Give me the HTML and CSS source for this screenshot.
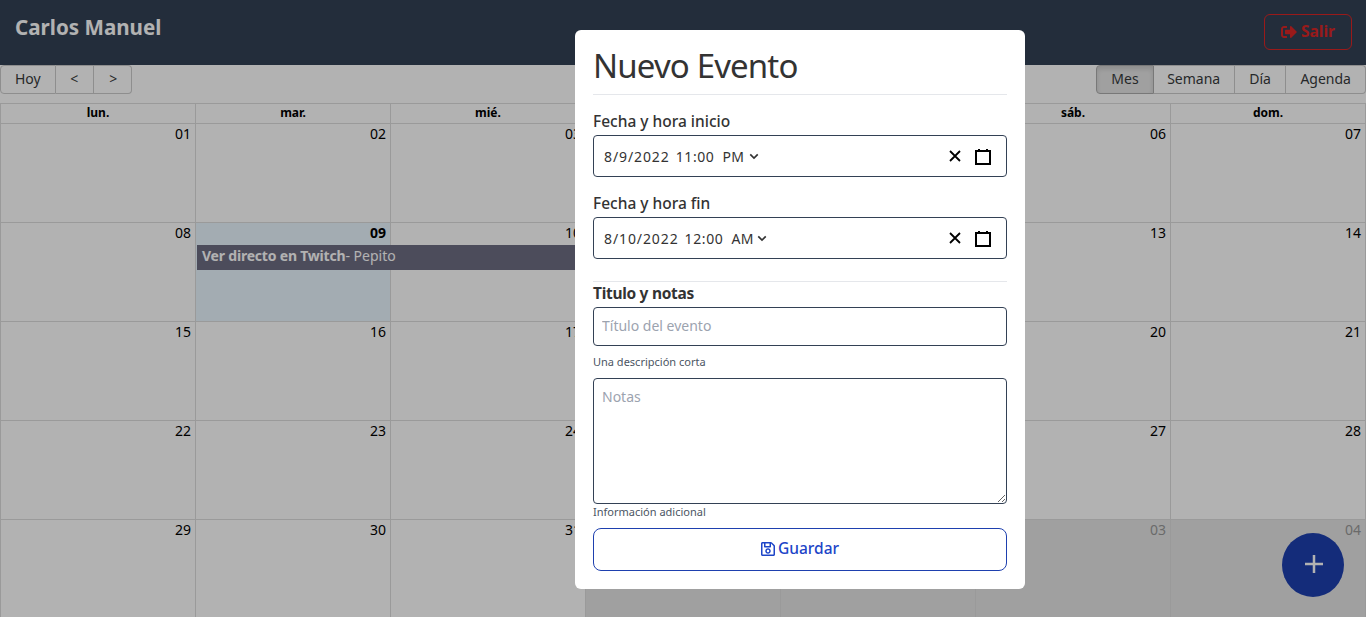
FILE: index.html
```html
<!DOCTYPE html>
<html lang="es">
<head>
<meta charset="utf-8">
<title>Calendario</title>
<link rel="stylesheet" href="styles.css">
</head>
<body>
<header class="topbar">
  <span class="brand">Carlos Manuel</span>
  <button class="logout">
    <svg class="logout-icon" viewBox="0 0 512 512"><path d="M497 273L329 441c-15 15-41 4.500-41-17v-96H152c-13.300 0-24-10.700-24-24v-96c0-13.300 10.700-24 24-24h136V88c0-21.400 25.900-32 41-17l168 168c9.300 9.400 9.300 24.600 0 34zM192 436v-40c0-6.600-5.400-12-12-12H96c-17.700 0-32-14.300-32-32V160c0-17.700 14.300-32 32-32h84c6.600 0 12-5.400 12-12V76c0-6.600-5.400-12-12-12H96c-53 0-96 43-96 96v192c0 53 43 96 96 96h84c6.600 0 12-5.400 12-12z"/></svg>
    Salir
  </button>
</header>

<main class="calendar">
  <div class="toolbar">
    <div class="btn-group">
      <button class="tb-btn">Hoy</button>
      <button class="tb-btn arrow">&lt;</button>
      <button class="tb-btn arrow">&gt;</button>
    </div>
    <span class="tb-label">Agosto 2022</span>
    <div class="btn-group">
      <button class="tb-btn active">Mes</button>
      <button class="tb-btn week">Semana</button>
      <button class="tb-btn narrow">Día</button>
      <button class="tb-btn">Agenda</button>
    </div>
  </div>
  <div class="grid">
    <div class="head">lun.</div><div class="head">mar.</div><div class="head">mié.</div><div class="head">jue.</div><div class="head">vie.</div><div class="head">sáb.</div><div class="head">dom.</div>
    <div class="day">01</div><div class="day">02</div><div class="day">03</div><div class="day">04</div><div class="day">05</div><div class="day">06</div><div class="day">07</div>
    <div class="day">08</div><div class="day today">09<div class="event"><b>Ver directo en Twitch</b>- Pepito</div></div><div class="day">10</div><div class="day">11</div><div class="day">12</div><div class="day">13</div><div class="day">14</div>
    <div class="day">15</div><div class="day">16</div><div class="day">17</div><div class="day">18</div><div class="day">19</div><div class="day">20</div><div class="day">21</div>
    <div class="day">22</div><div class="day">23</div><div class="day">24</div><div class="day">25</div><div class="day">26</div><div class="day">27</div><div class="day">28</div>
    <div class="day">29</div><div class="day">30</div><div class="day">31</div><div class="day off">01</div><div class="day off">02</div><div class="day off">03</div><div class="day off">04</div>
  </div>
</main>

<button class="fab" aria-label="Nuevo evento">
  <svg class="fab-icon" viewBox="0 0 18 18"><path d="M9 0v18M0 9h18"/></svg>
</button>

<div class="overlay">
  <form class="modal">
    <h1 class="modal-title">Nuevo Evento</h1>
    <hr class="rule">
    <label class="field-label">Fecha y hora inicio</label>
    <div class="date-input">
      <span class="date-text">8/9/2022</span><span class="date-text time">11:00</span><span class="date-text ampm">PM</span>
      <svg class="chev" viewBox="0 0 12 8"><path d="M1.500 1.500 6 6l4.500-4.500"/></svg>
      <svg class="clear" viewBox="0 0 12 12"><path d="M1 1l10 10M11 1 1 11"/></svg>
      <svg class="cal" viewBox="0 0 16 17"><path d="M1 3h14v13H1zM4 1v2M12 1v2"/></svg>
    </div>
    <label class="field-label second">Fecha y hora fin</label>
    <div class="date-input">
      <span class="date-text">8/10/2022</span><span class="date-text time">12:00</span><span class="date-text ampm am">AM</span>
      <svg class="chev" viewBox="0 0 12 8"><path d="M1.500 1.500 6 6l4.500-4.500"/></svg>
      <svg class="clear" viewBox="0 0 12 12"><path d="M1 1l10 10M11 1 1 11"/></svg>
      <svg class="cal" viewBox="0 0 16 17"><path d="M1 3h14v13H1zM4 1v2M12 1v2"/></svg>
    </div>
    <hr class="rule mid">
    <label class="field-label strong">Titulo y notas</label>
    <input class="text-input" type="text" placeholder="Título del evento">
    <small class="hint gap">Una descripción corta</small>
    <textarea class="text-area" placeholder="Notas"></textarea>
    <small class="hint">Información adicional</small>
    <button type="button" class="save">
      <svg class="save-icon" viewBox="0 0 448 512"><path d="M433.941 129.941l-83.882-83.882A48 48 0 0 0 316.118 32H48C21.490 32 0 53.490 0 80v352c0 26.510 21.490 48 48 48h352c26.510 0 48-21.490 48-48V163.882a48 48 0 0 0-14.059-33.941zM272 80v80H144V80h128zm122 352H54a6 6 0 0 1-6-6V86a6 6 0 0 1 6-6h42v104c0 13.255 10.745 24 24 24h176c13.255 0 24-10.745 24-24V83.882l78.243 78.243a6 6 0 0 1 1.757 4.243V426a6 6 0 0 1-6 6zM224 232c-48.523 0-88 39.477-88 88s39.477 88 88 88 88-39.477 88-88-39.477-88-88-88zm0 128c-22.056 0-40-17.944-40-40s17.944-40 40-40 40 17.944 40 40-17.944 40-40 40z"/></svg>
      Guardar
    </button>
  </form>
</div>
</body>
</html>
```
FILE: styles.css
```css
* { box-sizing: border-box; }
html, body { height: 100%; }
body {
  margin: 0;
  height: 617px;
  overflow: hidden;
  background: #fff;
  color: #000;
  font-family: "Noto Sans", "Open Sans", sans-serif;
  font-size: 14px;
}
button { font-family: inherit; }

.topbar {
  height: 65px;
  background: #334155;
  padding: 14px 14px 0 15px;
  display: flex;
  justify-content: space-between;
  align-items: flex-start;
}
.brand { color: #fff; font-size: 20.600px; font-weight: 700; line-height: 26px; }
.logout {
  width: 88px;
  height: 36px;
  background: transparent;
  border: 1px solid #dc2626;
  border-radius: 6px;
  color: #dc2626;
  font-size: 15.500px;
  font-weight: 700;
  display: flex;
  align-items: center;
  justify-content: center;
  gap: 4px;
  padding: 0 0 2px;
}
.logout-icon { width: 16px; height: 16px; fill: #dc2626; margin-top: 2px; }

.toolbar {
  height: 38px;
  display: flex;
  justify-content: space-between;
  align-items: flex-start;
  padding-right: 0;
}
.tb-label { font-size: 16px; color: #000; margin-left: 20px; }
.btn-group { display: flex; }
.tb-btn {
  height: 29px;
  background: transparent;
  border: 1px solid #ccc;
  border-left-width: 0;
  color: #373a3c;
  font-size: 14px;
  padding: 0 14px 2px;
}
.tb-btn:first-child { border-left-width: 1px; border-radius: 4px 0 0 4px; }
.tb-btn:last-child { border-radius: 0 4px 4px 0; }
.tb-btn.arrow { width: 38px; padding: 0 0 2px; }
.tb-btn.arrow:last-child { padding-left: 2px; }
.tb-btn.week { padding: 0 13.500px 2px; }
.tb-btn.narrow { padding: 0 14.500px 2px; }
.tb-btn.active { background: #e6e6e6; border-color: #adadad; box-shadow: inset 0 3px 5px rgba(0,0,0,.125); }

.grid {
  display: grid;
  grid-template-columns: repeat(7, 1fr);
  grid-template-rows: 20px repeat(5, 99px);
  border-top: 1px solid #ddd;
  border-left: 1px solid #ddd;
  width: 1366px;
}
.head {
  border-right: 1px solid #ddd;
  border-bottom: 1px solid #ddd;
  font-size: 12px;
  font-weight: 700;
  text-align: center;
  line-height: 18px;
}
.day {
  position: relative;
  border-right: 1px solid #ddd;
  border-bottom: 1px solid #ddd;
  text-align: right;
  padding: 0 4px 0 0;
  font-size: 14px;
  line-height: 20px;
}
.day.today { background: #eaf6ff; font-weight: 700; }
.day.off { background: #e6e6e6; color: #999; }
.event {
  position: absolute;
  left: 1px;
  top: 22px;
  width: 390px;
  height: 25px;
  background: #6e6d83;
  color: #fff;
  font-weight: 400;
  text-align: left;
  padding-left: 5px;
  line-height: 21px;
  z-index: 1;
  white-space: nowrap;
}
.event b { letter-spacing: -.2px; }

.fab {
  position: fixed;
  left: 1282px;
  top: 533px;
  width: 62px;
  height: 64px;
  border: 0;
  border-radius: 50%;
  background: #1e40af;
  display: flex;
  align-items: center;
  justify-content: center;
  padding: 0 0 2px 1px;
}
.fab-icon { width: 18px; height: 18px; fill: none; stroke: #fff; stroke-width: 2.500; }

.overlay {
  position: fixed;
  inset: 0;
  background: rgba(0,0,0,.3);
  z-index: 5;
  display: flex;
  justify-content: flex-start;
  align-items: flex-start;
  padding: 30px 0 0 575px;
}
.modal {
  width: 450px;
  height: 559px;
  background: #fff;
  border-radius: 6px;
  padding: 0 18px;
  display: flex;
  flex-direction: column;
  color: #333;
}
.modal-title { margin: 13px 0 0; font-size: 33px; font-weight: 400; line-height: 46px; letter-spacing: -.85px; color: #333; }
.rule { border: 0; border-top: 1px solid #e5e7eb; margin: 5px 0 0; width: 100%; }
.rule.mid { margin-top: 22px; }
.field-label { font-size: 15.500px; font-weight: 500; line-height: 22px; margin-top: 15px; }
.field-label.second { margin-top: 15px; }
.field-label.strong { font-weight: 700; margin-top: 0; letter-spacing: -.3px; }
.date-input {
  margin-top: 3px;
  height: 42px;
  border: 1px solid #334155;
  border-radius: 4px;
  display: flex;
  align-items: center;
  padding: 0 15px 0 10px;
  flex: none;
}
.date-text { font-size: 14px; letter-spacing: .9px; margin-right: 6px; }
.date-text.time { letter-spacing: .6px; margin-right: 8px; }
.date-text.ampm { letter-spacing: .4px; margin-right: 5px; }
.date-text.ampm.am { margin-right: 3px; }
.chev { width: 10px; height: 7px; fill: none; stroke: #333; stroke-width: 2; margin-top: 1px; }
.clear { width: 12px; height: 12px; margin-left: auto; fill: none; stroke: #000; stroke-width: 1.800; }
.cal { width: 16px; height: 17px; margin-left: 14px; fill: none; stroke: #000; stroke-width: 2; }
.text-input, .text-area {
  display: block;
  width: 100%;
  border: 1px solid #334155;
  border-radius: 4px;
  font-family: inherit;
  font-size: 14px;
  padding: 0 8px;
  flex: none;
}
.text-input { height: 39px; margin-top: 3px; padding-bottom: 2px; }
.text-area { height: 126px; padding-top: 8px; line-height: 20px; }
.text-input::placeholder, .text-area::placeholder { color: #9ca3af; }
.hint { font-size: 11px; line-height: 16px; color: #4b5563; flex: none; }
.hint.gap { margin: 8px 0 8px; }
.save {
  margin-top: 8px;
  height: 43px;
  flex: none;
  background: #fff;
  border: 1px solid #1e40af;
  border-radius: 8px;
  color: #1d45c8;
  font-size: 15.500px;
  font-weight: 500;
  display: flex;
  align-items: center;
  justify-content: center;
  gap: 3px;
  padding: 0 0 4px;
}
.save-icon { width: 14px; height: 16px; fill: #1d45c8; margin-top: 3px; }
```
